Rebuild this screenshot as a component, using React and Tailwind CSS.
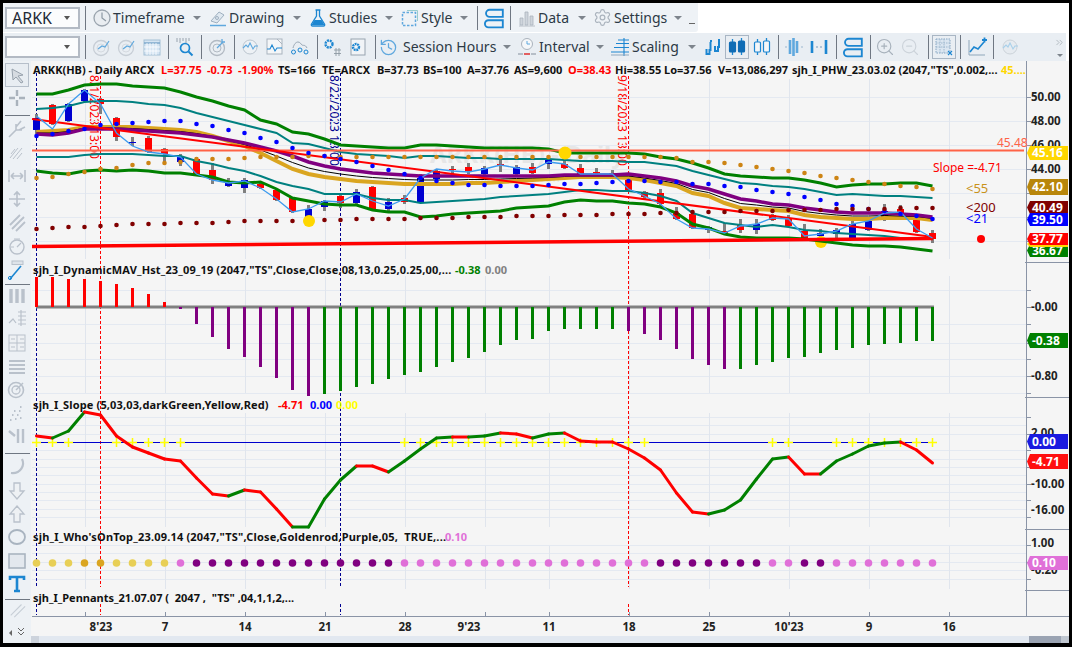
import React from "react";
import { Settings, ZoomIn, ZoomOut, ChevronsRight, History } from "lucide-react";

const X = (i) => 36.5 + 16 * i;
const pts = (a) => a.map((y, i) => `${X(i)},${y}`).join(" ");

const gU = [93,93,89,84,83,83,85,86,87,91,96,100,105,109,119,123,131,133,138,144,145,146,147,147,144,144,145,146,147,147,147,147,148,152,152,152,152,152,153,156,158,162,167,173,175,176,177,177,179,182,186,184,183,183,182,182,185];
const tU = [108,107,105,101,100,100,101,103,104,107,112,116,120,124,128,132,142,143,147,151,153,154,155,157,155,155,156,157,157,158,158,158,158,159,160,160,160,161,161,163,165,170,174,178,182,183,185,186,188,191,194,193,194,195,195,196,197];
const tL = [156,156,156,154,153,153,153,154,155,155,160,163,167,170,175,181,185,188,193,193,193,197,199,199,202,201,200,199,198,196,195,194,193,191,189,189,190,190,192,195,200,212,217,222,224,226,224,226,229,230,232,233,234,235,237,237,237];
const gL = [170,172,173,170,169,170,169,170,172,172,174,176,181,182,181,188,197,200,203,204,204,209,211,211,216,215,213,212,211,210,207,206,205,201,199,200,200,202,203,206,212,223,227,233,236,237,237,237,238,240,242,244,245,245,246,248,250];
const pur = [133,134,132,128,128,128,129,130,131,132,134,136,139,142,146,150,155,161,165,168,170,172,173,174,175,175,175,175,175,175,175,175,175,174,174,174,174,173,175,177,180,185,188,193,198,200,203,204,207,209,211,212,212,212,213,214,216];
const gold = [131,130,129,126,126,126,126,127,128,129,131,135,140,145,152,160,168,173,176,178,180,181,182,183,183,183,183,182,182,181,180,179,178,177,176,176,176,177,179,182,185,192,195,202,207,208,209,210,214,216,217,218,218,217,217,217,219];
const closes = [115,128,103,89,103,132,145,151,153,156,173,179,182,180,187,198,211,208,200,201,193,200,205,198,177,168,170,171,168,164,167,169,161,163,173,173,173,188,195,203,218,227,228,232,225,223,217,218,235,233,230,223,220,212,211,228,237];
const oDots = [177,176,173,171,168,167,164,162,162,161,158,158,158,157,156,156,156,155,155,156,156,156,156,156,156,156,156,156,156,156,156,156,156,156,156,156,156,156,156,156,157,161,161,162,164,166,168,170,172,175,177,179,181,183,185,186,188];
const bDots = [135,133,130,128,124,123,122,121,120,120,123,125,129,132,137,141,147,152,155,158,161,165,169,173,177,180,182,184,184,185,185,185,184,183,183,182,181,180,180,181,181,183,183,185,186,189,191,193,196,199,203,205,208,210,213,215,218];
const mDots = [228,227,226,226,225,224,223,223,223,222,222,222,221,220,220,220,220,220,219,219,218,218,218,218,217,217,217,216,216,216,215,215,215,214,214,214,213,213,213,212,212,211,211,211,210,210,210,209,209,209,208,208,208,208,207,207,207];

const R = "#ff0000", B = "#0000d0";
const candles = [
[117,129,113,133,B],[104,123,103,124,R],[103,120,102,121,B],[89,100,88,101,B],[98,103,97,113,R],[117,136,116,140,R],[141,142,136,145,B],[137,151,135,152,R],[148,153,147,163,R],[156,161,153,165,B],
[158,173,156,174,R],[169,179,162,183,R],[182,185,177,186,B],[179,187,177,192,B],[183,187,182,188,R],[189,199,188,200,R],[197,211,196,212,R],[208,217,204,222,B],[200,206,199,210,B],[195,202,193,207,R],
[191,202,188,204,B],[186,208,185,209,R],[201,208,197,210,B],[197,201,194,203,R],[177,201,173,202,B],[170,178,168,182,B],[168,169,165,175,R],[166,170,162,173,R],[167,173,165,175,B],[163,164,159,171,R],
[166,173,164,175,B],[166,172,162,173,R],[158,163,157,168,B],[163,167,158,168,R],[167,173,163,175,R],[171,172,167,175,R],[172,175,169,177,R],[179,189,178,190,R],[191,196,190,199,R],[192,203,188,205,R],
[212,218,206,219,R],[213,227,212,228,R],[226,229,225,232,B],[230,232,222,232,R],[224,229,218,232,R],[223,229,218,233,B],[214,219,213,220,R],[217,225,214,226,R],[230,237,223,238,R],[232,235,228,237,B],
[229,233,227,237,B],[223,237,220,238,B],[220,229,219,230,B],[210,219,203,220,B],[208,214,204,218,R],[218,231,217,232,R],[232,238,229,242,R]];

const histTop = [276,276,278,278,280,283,287,293,301];
const hb = [null,null,null,null,null,null,null,null,null,308,323,336,348,356,366,377,389,395,393,390,386,383,378,374,371,366,361,357,351,344,339,338,330,328,328,328,328,330,333,339,348,358,364,368,368,364,361,357,356,352,349,347,344,343,342,340,340];

const sl = [435,437,430,411,414,435,446,452,458,460,477,493,495,489,491,508,526,526,498,479,465,465,471,460,448,437,436,436,435,432,433,437,433,432,440,441,441,448,457,469,492,511,513,509,499,478,458,456,473,473,460,453,445,442,441,449,462];
const slG = new Set([1,2,12,16,17,18,19,22,23,24,25,27,28,31,32,42,43,44,45,46,49,50,51,52,53]);
const plus = [0,1,2,5,6,7,8,9,23,24,25,26,27,28,29,30,31,32,33,34,35,36,37,38,46,47,50,51,52,53,54,55,56];
const LG = "#e8cf56", DG = "#daa520", OR = "#e070d8", PU = "#800080";
const dotCol = (i) => i < 3 ? LG : i < 5 ? DG : i < 9 ? LG : i === 9 ? OR : i < 23 ? PU : i < 39 ? OR : i < 46 ? PU : i < 48 ? OR : i < 50 ? PU : OR;

const vgrid = [85,165,245,325,405,485,549,629,709,789,869,949];
const hgrid = [96,120,144,168,192,216,240,289,323,342,358,375,392,416,424,433,449,458,466,474,483,491,499,508,516,544,552,561,569,578];

const C = "#1c86d1", G = "#b4bdc9", L = "#5fa8de";

function Ic({ children, s = 20 }) {
  return <svg width={s} height={s} viewBox="0 0 20 20" fill="none" className="shrink-0">{children}</svg>;
}
const ClockI = () => <Ic><circle cx="10" cy="10" r="8" fill="#e9edf1" stroke="#9aa4ae" strokeWidth="1.3"/><path d="M10 4.5V10l4 3" stroke="#8d98a3" strokeWidth="1.2"/></Ic>;
const DrawI = () => <Ic><path d="M3 13 11 4l5 3-7 8z" fill="#dfe8f0" stroke="#9fb0c0"/><circle cx="9" cy="10" r="1.5" stroke="#9fb0c0"/><path d="M2 17.5h16" stroke={L} strokeWidth="1.5"/></Ic>;
const FlaskI = () => <Ic><path d="M7.5 2h5M8.5 2v6L3.5 16c-.6 1 .1 2 1 2h11c1 0 1.6-1 1-2l-5-8V2" stroke={C} strokeWidth="1.3"/><path d="M6.5 12h7l3 5H3.5z" fill={C}/></Ic>;
const StyleI = () => <Ic><rect x="2.5" y="4.5" width="13" height="13" stroke={L} strokeWidth="1.5" strokeDasharray="2.5 1.5"/><path d="M7 2.5h10.5V13" stroke="#9cc" strokeWidth="1"/></Ic>;
const LayersI = () => <Ic s={22}><path d="M18 2.5H6a3 3 0 0 0 0 6.5h12zM18 12H5a3 3 0 0 0 0 6.5h13z" stroke={C} strokeWidth="1.7"/></Ic>;
const DataI = () => <Ic><path d="M3 17V10h3v7zM8 17V4h3v13zM13 17v-9h3v9zM2 18h16" fill="#cfd5dc" stroke="#aab3bd" strokeWidth=".8"/></Ic>;
const SetI = () => <Settings size={19} color="#aab3bd" strokeWidth={1.5} className="shrink-0"/>;
const CircArrow = () => <Ic><circle cx="9" cy="11" r="7.5" stroke="#c7ced6" strokeWidth="1.3"/><circle cx="9" cy="11" r="4" stroke="#d5dae0"/><path d="M6 12l4-3 3 1 4-6" stroke={L} strokeWidth="1.2"/></Ic>;
const CalI = () => <Ic><rect x="2" y="3" width="16" height="15" fill="#d5e5f3" stroke="#a4bfd6"/><path d="M2 6h16" stroke="#7ea8cc" strokeWidth="1.5"/><path d="M5 6v12M8 6v12M11 6v12M14 6v12M2 10h16M2 14h16" stroke="#fff" strokeWidth=".8"/></Ic>;
const SrchI = () => <Ic><path d="M2 1v4M5 1v5M8 1v3M11 1v5M14 1v3" stroke="#99a4af"/><circle cx="10" cy="11" r="4.5" stroke={C} strokeWidth="1.7"/><path d="M13.5 14.5 17.5 18.5" stroke={C} strokeWidth="2"/></Ic>;
const TargetI = () => <Ic><circle cx="9" cy="11" r="7.5" stroke="#b2bac3" strokeWidth="1.3"/><circle cx="9" cy="11" r="4" stroke="#b2bac3"/><path d="M9 11l6-6M14 2v3h3" stroke={L} strokeWidth="1.3"/></Ic>;
const WaveC = () => <Ic><circle cx="10" cy="10" r="7" fill="#edf1f5" stroke="#bcc6d0"/><path d="M3 11l3-3 2 2 2-4 3 6 2-3h3" stroke={L} strokeWidth="1.1"/></Ic>;
const BoxW = () => <Ic><rect x="2" y="2" width="15" height="15" fill="#f4f6f8" stroke="#aab4bf"/><path d="M2 12h3l2-4 3 6 2-3h5" stroke={C} strokeWidth="1.1"/><path d="M12 2l5 5" stroke="#aab4bf"/></Ic>;
const Nodes = () => <Ic><path d="M3 11c1-4 3-6 5-6s3 2 4 3 3-1 5 3" stroke="#98a6b4"/><circle cx="3.5" cy="15" r="2" stroke={C}/><circle cx="10" cy="13" r="2" stroke={C}/><circle cx="16" cy="15" r="2" stroke={C}/></Ic>;
const GearH = () => <Ic><circle cx="7" cy="7" r="3.5" stroke={C} strokeWidth="2.4" strokeDasharray="2 .8"/><path d="M12 13h7M12 16.5h7M14 11v8M17 11v8" stroke="#8d98a3" strokeWidth=".9"/></Ic>;
const GearB = () => <Ic><rect x="4" y="2" width="14" height="16" fill="#f1f4f7" stroke="#98a4b0"/><circle cx="9" cy="10" r="3" stroke={C} strokeWidth="2.4" strokeDasharray="1.8 .7"/></Ic>;
const HistI = () => <History size={19} color={L} strokeWidth={1.6} className="shrink-0"/>;
const IntI = () => <Ic><circle cx="10" cy="7" r="5.5" stroke="#aab3bd" fill="#f5f7f9"/><path d="M10 4v3h3" stroke={L}/><path d="M1 17h5" stroke="#a9b2bc" strokeWidth="1.6"/><path d="M7 17h6" stroke="#e03a3a" strokeWidth="1.6"/><path d="M14 17h5" stroke="#a9b2bc" strokeWidth="1.6"/></Ic>;
const ScalI = () => <Ic><path d="M1 15h18M4 10.5h15M6 6.5h13M8 3h11M14 1v18" stroke={C} strokeWidth="1.1"/><path d="M1 18h18" stroke="#8fa8bd"/></Ic>;
const Notes = () => <Ic><path d="M3.5 12v5h3v-4h1v-8" stroke={C} strokeWidth="2"/><path d="M12 9v5h3V10h1V3" stroke={C} strokeWidth="2"/><path d="M7 4h2M15 3h2" stroke={C} strokeWidth="2"/></Ic>;
const Cand = ({ filled }) => <Ic><path d="M5.5 2v16M14.5 1v17" stroke={C} strokeWidth="1.3"/><rect x="2.5" y="5" width="6" height="10" rx="1" fill={filled ? "#0f6cb5" : "#f4f6f8"} stroke={filled ? "#0f6cb5" : C} strokeWidth="1.2"/><rect x="11.5" y="4" width="6" height="11" rx="1" fill={filled ? "#0f6cb5" : "#f4f6f8"} stroke={filled ? "#0f6cb5" : C} strokeWidth="1.2"/></Ic>;
const Mx1 = () => <Ic><path d="M1 10h2M17 10h2" stroke="#9bb7cf"/><path d="M6 3v14M9.5 1v18M13 4v12" stroke={L} strokeWidth="2.6"/></Ic>;
const Mx2 = () => <Ic><path d="M3 4v12M17 3v14" stroke={C} strokeWidth="2.6"/><path d="M7 10h2M11 10h2" stroke="#9bb7cf" strokeWidth="1.4"/></Ic>;
const GridB = () => <Ic><rect x="2" y="2" width="14" height="14" fill="#dbe6f1" stroke="#86a6c3" strokeDasharray="1.5 1"/><path d="M2 6h14M2 10h14M6 2v14M10 2v14" stroke="#9fb8cf" strokeDasharray="1.5 1"/><path d="M14 14l4 4M18 14l-4 4" stroke={C} strokeWidth="1.1"/></Ic>;
const ChartP = () => <Ic><path d="M2 3v15h16" stroke="#8fa7ba"/><path d="M3 15l4-5 4 2 6-7" stroke={C} strokeWidth="1.6"/><path d="M15 3h5M17.5 .5v5" stroke={C} strokeWidth="1.8"/></Ic>;
const WaveG = () => <Ic><circle cx="10" cy="10" r="7" fill="#e6ebf0" stroke="#ccd3da"/><path d="M3 11l3-3 2 2 2-4 3 6 2-3h3" stroke="#a8d0ea" strokeWidth="1.1"/></Ic>;

const g = "#b9c1cb";
const Rail = [
  <path d="M5 4l11 6-5 1 5 6-2 1-5-6-3 3z" fill="#d6dbe1" stroke="#98a2ad"/>,
  <><path d="M10 2v6M10 12v6M2 10h6M12 10h6" stroke="#a9b2bc" strokeWidth="2.4"/></>,
  <path d="M2 18l7-7M9 11V5M9 11h6M9 8l5-6M12 11l6-3" stroke={g} strokeWidth="1.6"/>,
  <path d="M3 16L11 6M6 17l9-11M10 17l5-6M4 12l4-5" stroke={g} strokeWidth="1"/>,
  <path d="M4 10h12M4 10l3-3M4 10l3 3M16 10l-3-3M16 10l-3 3M2 4v12M18 4v12" stroke={g} strokeWidth="1.6"/>,
  <path d="M2 10h16M10 4v12M7 6l3-3 3 3M7 14l3 3 3-3" stroke={g} strokeWidth="1.6"/>,
  <path d="M3 12L13 2M5 16L17 4M9 18 18 9" stroke={g} strokeWidth="1.8"/>,
  <><circle cx="10" cy="11" r="7" stroke={g} strokeWidth="1.4"/><path d="M7 3h6M10 11l4-4M4 11h3" stroke={g} strokeWidth="1.2"/></>,
  <><path d="M3 19 14 6" stroke={C} strokeWidth="1.6"/><rect x="5" y="1" width="11" height="3.5" fill="#dfe4ea" stroke={g}/><circle cx="3" cy="18" r="1.6" stroke={C}/></>,
];
const Rail2 = [
  <path d="M4 3v14M10 3v14M16 3v14" stroke={g} strokeWidth="3.4"/>,
  <path d="M2 14l4-4 3 4M11 3h8M11 7h8M11 11h8M11 15h8M14 1v16" stroke={g} strokeWidth="1.2"/>,
  <><rect x="2" y="2" width="16" height="16" fill="#eef1f4" stroke={g}/><path d="M10 2v16M2 10h16M4 6h4M13 6h4M4 14h4M13 14h4" stroke={g}/></>,
  <path d="M2 5h16M2 9h16M2 13h16M2 17h16" stroke={g} strokeWidth="1.8"/>,
  <><circle cx="9" cy="11" r="7.5" stroke={g} strokeWidth="1.6"/><circle cx="9" cy="11" r="4" stroke={g} strokeWidth="1.3"/><path d="M9 11l7-7" stroke={g} strokeWidth="1.5"/></>,
  <path d="M3 17h2M8 16h2M5 12h2M10 12h2M7 8h2M12 8h2M13 4h2M13 15h2" stroke={g} strokeWidth="1.8" strokeDasharray="1.5 1"/>,
  <path d="M11 3v14M16 3v14M2 5l6 5" stroke={g} strokeWidth="2.4"/>,
];
const Rail3 = [
  <path d="M15 2c3 6-1 15-11 14" stroke={g} strokeWidth="2.2"/>,
  <path d="M7 2h6v8h4l-7 8-7-8h4z" fill="#eef1f4" stroke={g} strokeWidth="1.3"/>,
  <path d="M10 2l7 8h-4v8H7v-8H3z" fill="#eef1f4" stroke={g} strokeWidth="1.3"/>,
  <ellipse cx="10" cy="10" rx="8" ry="7" stroke="#a9b4c0" strokeWidth="1.8"/>,
  <rect x="2" y="3" width="16" height="14" fill="#e3e8ee" stroke="#a9b4c0" strokeWidth="1.6"/>,
  <path d="M3 6V3h14v3M10 3v14M7 17h6" stroke={C} strokeWidth="2.6"/>,
];

function Sep() { return <div className="w-px h-[24px] bg-[#6f7782] shrink-0" />; }
function Caret() { return <span className="ml-auto w-0 h-0 border-x-[4px] border-x-transparent border-t-[4px] border-t-[#7d848c] shrink-0" />; }
function Menu({ icon, label, cls }) {
  return (
    <div className={`flex items-center h-full pr-[2px] shrink-0 ${cls}`}>
      <span className="w-[21px] flex justify-start items-center shrink-0">{icon}</span>
      <span className="text-[14px] text-[#2c3945] [font-family:'Noto_Sans',sans-serif] whitespace-nowrap leading-none">{label}</span>
      <Caret />
    </div>
  );
}
function Btn({ children, on, w = "w-[25px]" }) {
  return <div className={`${w} h-[24px] flex items-center justify-center shrink-0 ${on ? "border border-[#a9b6c4]" : ""}`}>{children}</div>;
}
function Combo({ text }) {
  return (
    <div className="w-[75px] h-[22px] border-2 border-[#b3bac4] bg-[#fbfcfd] flex items-center px-[5px] shrink-0">
      <span className="text-[16px] leading-none text-[#1f2a36] [font-family:'Noto_Sans',sans-serif]">{text}</span>
      <span className="ml-auto mr-[3px] w-0 h-0 border-x-[3px] border-x-transparent border-t-[4px] border-t-[#555]" />
    </div>
  );
}

function Legend({ y, items, cls = "" }) {
  return (
    <>
      {items.map(([x, t, c], k) => (
        <span key={k} className={`absolute whitespace-pre text-[11px] leading-[14px] font-bold ${k === 0 ? cls : ""}`} style={{ left: x - 31, top: y - 67, color: c || "#111" }}>{t}</span>
      ))}
    </>
  );
}

const axisLabels = [["50.00",96],["48.00",120],["46.00",144],["44.00",168],["-0.00",306],["-0.80",375],["2.00",432],["-10.00",483],["-16.00",509],["1.00",542],["-0.20",569]];
const tags = [
  ["36.67", 243, 256, "#008000"],
  ["", 240, 246, "#ffd700"],
  ["37.77", 232, 244, "#ff0000"],
  ["40.49", 200, 213, "#800000"],
  ["39.50", 212, 225, "#0000ff"],
  ["42.10", 178, 194, "#b8860b"],
  ["45.16", 145, 159, "#ffd700"],
  ["-0.38", 332, 347, "#008000"],
  ["0.00", 433, 448, "#1a1ae0"],
  ["-4.71", 453, 468, "#ff0f0f"],
  ["0.10", 555, 569, "#e070d8"],
];
const xLabels = [["8'23",101],["7",165],["14",245],["21",325],["28",405],["9'23",469],["11",549],["18",629],["25",709],["10'23",789],["9",869],["16",949]];

export default function App() {
  return (
    <div className="w-[1072px] h-[647px] bg-black pt-[3px] pl-[3px] pr-[3px] pb-[4px] overflow-hidden [font-family:'Liberation_Sans',Arial,sans-serif]">
      <div className="w-[1066px] h-[640px] bg-white flex flex-col">
        <div className="h-[29px] w-[695px] bg-[#eef2f6] rounded-br-[3px] flex items-center pl-[2px] shrink-0">
          <Combo text="ARKK" />
          <div className="ml-[5px]"><Sep /></div>
          <div className="ml-[6px] flex h-full"><Menu icon={<ClockI />} label="Timeframe" cls="w-[111px]" /></div>
          <div className="ml-[5px] flex h-full"><Menu icon={<DrawI />} label="Drawing" cls="w-[95px]" /></div>
          <div className="ml-[5px] flex h-full"><Menu icon={<FlaskI />} label="Studies" cls="w-[87px]" /></div>
          <div className="ml-[5px] flex h-full"><Menu icon={<StyleI />} label="Style" cls="w-[70px]" /></div>
          <div className="ml-[7px]"><Sep /></div>
          <div className="ml-[5px] w-[22px] flex justify-center"><LayersI /></div>
          <div className="ml-[5px]"><Sep /></div>
          <div className="ml-[6px] flex h-full"><Menu icon={<DataI />} label="Data" cls="w-[71px]" /></div>
          <div className="ml-[5px] flex h-full"><Menu icon={<SetI />} label="Settings" cls="w-[91px]" /></div>
          <div className="ml-[5px] mt-[13px] w-[6px] h-[2px] border-t border-[#666]" />
        </div>
        <div className="h-[28px] w-[1063px] mt-[1px] bg-[#e9eef3] flex items-center pl-[2px] shrink-0">
          <Combo text="" />
          <div className="ml-[5px]"><Sep /></div>
          <div className="ml-[3px] flex"><Btn><CircArrow /></Btn><Btn><CircArrow /></Btn><Btn><CalI /></Btn></div>
          <div className="ml-[4px]"><Sep /></div>
          <div className="ml-[3px]"><Btn><SrchI /></Btn></div>
          <div className="ml-[4px]"><Sep /></div>
          <div className="ml-[3px]"><Btn><TargetI /></Btn></div>
          <div className="ml-[4px]"><Sep /></div>
          <div className="ml-[2px] flex"><Btn><WaveC /></Btn><Btn><BoxW /></Btn><Btn><Nodes /></Btn></div>
          <div className="ml-[5px]"><Sep /></div>
          <div className="ml-[1px] flex"><Btn><GearH /></Btn><Btn><GearB /></Btn></div>
          <div className="ml-[6px]"><Sep /></div>
          <div className="ml-[3px] flex h-full"><Menu icon={<HistI />} label="Session Hours" cls="w-[134px] [&>span:first-child]:w-[24px]" /></div>
          <div className="ml-[4px] flex h-full"><Menu icon={<IntI />} label="Interval" cls="w-[89px] [&>span:first-child]:w-[22px]" /></div>
          <div className="ml-[4px] flex h-full"><Menu icon={<ScalI />} label="Scaling" cls="w-[88px] [&>span:first-child]:w-[22px]" /></div>
          <div className="ml-[2px] flex"><Btn><Notes /></Btn><Btn on w="w-[24px]"><Cand filled /></Btn><Btn><Cand /></Btn></div>
          <div className="ml-[4px]"><Sep /></div>
          <div className="ml-[2px] flex"><Btn><Mx1 /></Btn><Btn><Mx2 /></Btn></div>
          <div className="ml-[5px]"><Sep /></div>
          <div className="ml-[3px]"><Btn><LayersI /></Btn></div>
          <div className="ml-[5px]"><Sep /></div>
          <div className="ml-[1px] flex">
            <Btn><ZoomIn size={20} color="#a8b2bc" strokeWidth={1.4} /></Btn>
            <Btn><ZoomOut size={20} color="#ccd3da" strokeWidth={1.4} /></Btn>
          </div>
          <div className="ml-[6px]"><Sep /></div>
          <div className="ml-[3px]"><Btn on w="w-[24px]"><GridB /></Btn></div>
          <div className="ml-[4px]"><Sep /></div>
          <div className="ml-[3px]"><Btn><ChartP /></Btn></div>
          <div className="ml-[4px]"><Sep /></div>
          <div className="ml-[3px]"><Btn><WaveG /></Btn></div>
          <div className="ml-auto mr-[1px] flex flex-col items-center text-[#8a929b]">
            <ChevronsRight size={11} strokeWidth={1.2} />
            <span className="mt-[6px] w-0 h-0 border-x-[3px] border-x-transparent border-t-[3px] border-t-[#7d848c]" />
          </div>
        </div>

        <div className="flex flex-1 min-h-0">
          <div className="w-[28px] bg-[#edf1f5] flex flex-col items-center shrink-0">
            <div className="mt-[2px] w-[24px] h-[24px] border border-[#b6bfca] bg-[#e8edf2] flex items-center justify-center"><Ic>{Rail[0]}</Ic></div>
            <div className="h-[22px] flex items-center"><Ic>{Rail[1]}</Ic></div>
            <div className="mt-[6px] w-[25px] h-px bg-[#6f7782]" />
            <div className="flex flex-col mt-[1px]">
              {Rail.slice(2).map((r, i) => <div key={i} className="h-[23.5px] flex items-center justify-center"><Ic>{r}</Ic></div>)}
            </div>
            <div className="mt-[2px] w-[25px] h-px bg-[#6f7782]" />
            <div className="flex flex-col">
              {Rail2.map((r, i) => <div key={i} className="h-[23.3px] flex items-center justify-center"><Ic>{r}</Ic></div>)}
            </div>
            <div className="mt-[5px] w-[25px] h-px bg-[#6f7782]" />
            <div className="flex flex-col mt-[2px]">
              {Rail3.map((r, i) => <div key={i} className="h-[23.4px] flex items-center justify-center"><Ic>{r}</Ic></div>)}
            </div>
            <div className="mt-[3px] w-[25px] h-px bg-[#6f7782]" />
            <div className="h-[19px] flex items-center"><Ic s={18}><path d="M3 17 15 5M7 19 19 7" stroke="#c7ced6" strokeWidth="1.2"/></Ic></div>
            <div className="mt-[8px] w-full flex justify-between px-[6px] text-[#666]">
              <span className="mt-[3px] w-0 h-0 border-y-[3px] border-y-transparent border-r-[3px] border-r-[#666]" />
              <svg width="8" height="9" viewBox="0 0 8 9" fill="none"><path d="M1 1l3 3 3-3M1 5l3 3 3-3" stroke="#666"/></svg>
            </div>
          </div>

          <div className="relative flex-1 bg-[#f5f5f5]">
            <span className="absolute left-[399px] top-[81px] text-[24px] leading-none font-bold text-[#e6e6e6] whitespace-nowrap">ARKK(HB) - Daily</span>
            <span className="absolute left-[440px] top-[112px] text-[10px] leading-none text-[#e6e6e6] whitespace-nowrap">ARK Innovation ETF</span>

            <span className="absolute left-[57px] top-[14px] text-[12px] leading-none text-[#ff0000] [writing-mode:vertical-rl] whitespace-nowrap">8/1/2023 13:00</span>
            <span className="absolute left-[297px] top-[14px] text-[12px] leading-none text-[#000090] [writing-mode:vertical-rl] whitespace-nowrap">8/22/2023 13:00</span>
            <span className="absolute left-[585px] top-[14px] text-[12px] leading-none text-[#ff0000] [writing-mode:vertical-rl] whitespace-nowrap">9/18/2023 13:00</span>

            <svg className="absolute left-0 top-0" width="1038" height="576" viewBox="31 60 1038 576">
              {hgrid.map((y) => <line key={y} x1="32" x2="1026" y1={y + .5} y2={y + .5} stroke="#e4e9f1" />)}
              {vgrid.map((x) => (
                <g key={x} stroke="#e0e5ed">
                  <line x1={x + .5} x2={x + .5} y1="78" y2="258" />
                  <line x1={x + .5} x2={x + .5} y1="275" y2="392" />
                  <line x1={x + .5} x2={x + .5} y1="412" y2="526" />
                  <line x1={x + .5} x2={x + .5} y1="545" y2="588" />
                  <line x1={x + .5} x2={x + .5} y1="611" y2="615" stroke="#8a94a6" />
                </g>
              ))}
              <g strokeWidth="1" strokeDasharray="3 2">
                <path d="M36.5 72V586M36.5 603V614M340.5 72V586M340.5 603V614" stroke="#000090" />
                <path d="M100.5 75V586M100.5 603V614M628.5 75V586M628.5 603V614" stroke="#ff0000" />
              </g>
              {candles.map(([t, b, wt, wb, c], i) => (
                <g key={i}>
                  <line x1={X(i)} x2={X(i)} y1={wt} y2={wb} stroke="#808080" strokeWidth="3" />
                  <rect x={X(i) - 3.5} y={t} width="7" height={Math.max(b - t, 1)} fill={c} />
                </g>
              ))}
              <circle cx="821" cy="241" r="6" fill="#ffd700" />
              <polyline points={pts(tU)} fill="none" stroke="#008080" strokeWidth="2" />
              <polyline points={pts(tL)} fill="none" stroke="#008080" strokeWidth="2" />
              <polyline points={pts(gU)} fill="none" stroke="#008000" strokeWidth="3" />
              <polyline points={pts(gL)} fill="none" stroke="#008000" strokeWidth="3" />
              <polyline points={pts(gold)} fill="none" stroke="#daa520" strokeWidth="4" />
              <polyline points={pts(gold.map((g, i) => (g + pur[i]) / 2))} fill="none" stroke="#000" strokeWidth="1" />
              <polyline points={pts(pur)} fill="none" stroke="#800080" strokeWidth="3.5" />
              <line x1="32" x2="1024" y1="149.5" y2="149.5" stroke="#ff6347" strokeWidth="2" />
              <line x1="32" x2="933" y1="118" y2="236" stroke="#ff0000" strokeWidth="2" />
              <line x1="32" x2="933" y1="245.5" y2="237.5" stroke="#ff0000" strokeWidth="3.5" />
              <polyline points={pts(closes)} fill="none" stroke="#3d9bee" strokeWidth="1.3" />
              {oDots.map((y, i) => <circle key={i} cx={X(i)} cy={y} r="2.3" fill="#cd8414" />)}
              {bDots.map((y, i) => <circle key={i} cx={X(i)} cy={y} r="2.3" fill="#0000ff" />)}
              {mDots.map((y, i) => <circle key={i} cx={X(i)} cy={y} r="2.3" fill="#800000" />)}
              <circle cx="309" cy="220" r="6" fill="#ffd700" />
              <circle cx="565" cy="152" r="6.5" fill="#ffd700" />
              <circle cx="981" cy="238" r="4" fill="#ff0000" />

              <line x1="36" x2="934" y1="306" y2="306" stroke="#808080" strokeWidth="3" />
              {histTop.map((t, i) => <line key={i} x1={X(i)} x2={X(i)} y1={t} y2="306" stroke="#ff0000" strokeWidth="3" />)}
              {hb.map((b, i) => b && <line key={i} x1={X(i)} x2={X(i)} y1="306" y2={b} stroke={i < 18 || (i > 36 && i < 44) ? "#800080" : "#008000"} strokeWidth="3" />)}

              <line x1="32" x2="937" y1="441.5" y2="441.5" stroke="#0000cd" />
              {plus.map((i) => <path key={i} d={`M${X(i) - 4.5} 441.5H${X(i) + 4.5}M${X(i)} 437V446`} stroke="#ffff00" strokeWidth="1.5" />)}
              {sl.slice(0, -1).map((y, i) => (
                <line key={i} x1={X(i)} x2={X(i + 1)} y1={y} y2={sl[i + 1]} stroke={slG.has(i) ? "#008000" : "#ff0000"} strokeWidth="3" strokeLinecap="round" />
              ))}

              {sl.map((_, i) => <circle key={i} cx={X(i)} cy="562" r="3.8" fill={dotCol(i)} />)}

              <line x1="1026.5" x2="1026.5" y1="60" y2="615" stroke="#8a94a6" />
              <line x1="32" x2="1069" y1="615.5" y2="615.5" stroke="#8a94a6" />
              <path d="M1025 261.5H1069M1025 396.5H1069M1025 528.5H1069M1025 589.5H1069" stroke="#8a94a6" />
              {[96,120,144,168,192,216,240,289,306,323,342,358,375,392,416,433,449,466,483,499,516,544,561,578].map((y) => (
                <line key={y} x1="1027" x2="1031" y1={y + .5} y2={y + .5} stroke="#8a94a6" />
              ))}
            </svg>

            <Legend y={69} items={[[33,"ARKK(HB) - Daily"],[125,"ARCX"],[161,"L=37.75",R],[207,"-0.73",R],[238,"-1.90%",R],[278,"TS=166"],[322,"TE=ARCX"],[377,"B=37.73"],[423,"BS=100"],[467,"A=37.76"],[514,"AS=9,600"],[568,"O=38.43",R],[615,"Hi=38.55"],[664,"Lo=37.56"],[718,"V=13,086,297"],[792,'sjh_I_PHW_23.03.02 (2047,"TS",0.002,...'],[1001,"45....","#ffd700"]]} />
            <Legend y={269} cls="tracking-[0.14px]" items={[[33,'sjh_I_DynamicMAV_Hst_23_09_19 (2047,"TS",Close,Close,08,13,0.25,0.25,00,...'],[455,"-0.38","#008000"],[485,"0.00","#808080"]]} />
            <Legend y={404} cls="tracking-[0.14px]" items={[[33,"sjh_I_Slope (5,03,03,darkGreen,Yellow,Red)"],[278,"-4.71",R],[310,"0.00","#0000ff"],[336,"0.00","#ffff00"]]} />
            <Legend y={536} cls="tracking-[0.19px]" items={[[33,`sjh_I_Who'sOnTop_23.09.14 (2047,"TS",Close,Goldenrod,Purple,05,  TRUE,...`],[445,"0.10",OR]]} />
            <Legend y={597} items={[[33,'sjh_I_Pennants_21.07.07 (  2047 ,  "TS" ,04,1,1,2,...']]} />

            <span className="absolute left-[966px] top-[75px] text-[12px] leading-[14px] text-[#ff6347]">45.48</span>
            <span className="absolute left-[902px] top-[100px] text-[12px] leading-[14px] text-[#ff0000]">Slope =-4.71</span>
            <span className="absolute left-[935px] top-[120px] text-[13px] leading-[14px] text-[#c9921a]">&lt;55</span>
            <span className="absolute left-[935px] top-[139px] text-[13px] leading-[14px] text-[#800000]">&lt;200</span>
            <span className="absolute left-[935px] top-[150px] text-[13px] leading-[14px] text-[#0000ff]">&lt;21</span>

            {axisLabels.map(([t, y]) => (
              <span key={t} className="absolute left-[1000px] text-[11.5px] leading-[14px] font-bold text-[#222]" style={{ top: y - 67 }}>{t}</span>
            ))}
            {tags.map(([t, a, b, c], k) => (
              <div key={k} className="absolute left-[996px] w-[41px] flex items-center pl-[5px] text-[12px] font-bold text-white leading-none [clip-path:polygon(3px_0,100%_0,100%_100%,3px_100%,0_50%)]" style={{ top: a - 60, height: b - a, background: c }}>{t}</div>
            ))}
            {xLabels.map(([t, x]) => (
              <span key={x} className="absolute w-[40px] -ml-[20px] text-center text-[11.5px] leading-[14px] font-bold text-[#222]" style={{ left: x - 31, top: 559 }}>{t}</span>
            ))}
            <div className="absolute left-0 right-0 bottom-0 h-[7px] bg-[#e2e8f0] flex">
              <div className="w-[8px] bg-[#cdd3dc]" />
              <div className="ml-auto w-[32px] bg-[#9aa3b2]" />
              <div className="w-[8px] bg-[#c0c7d0]" />
            </div>
          </div>
        </div>
      </div>
    </div>
  );
}
